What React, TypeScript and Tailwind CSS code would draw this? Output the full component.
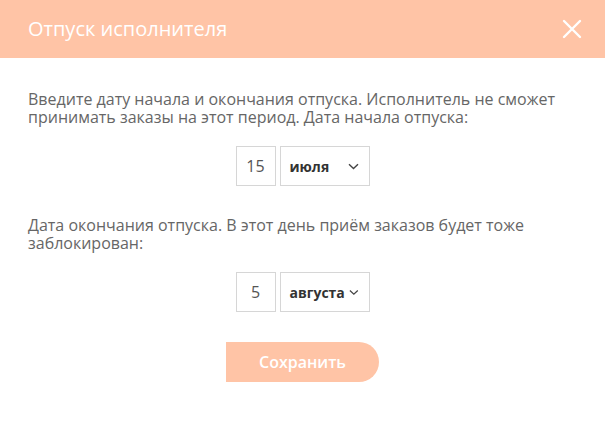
function DatePicker({ day, month }: { day: string; month: string }) {
  return (
    <div className="flex justify-center gap-[4px]">
      <div className="flex h-[40px] w-[40px] items-center justify-center border border-[#d6d6d6] text-[16px] text-[#555]">
        {day}
      </div>
      <div className="flex h-[40px] w-[90px] items-center justify-between gap-[4px] border border-[#d6d6d6] pl-[9px] pr-[10px]">
        <span className="text-[14px] font-bold text-[#333]">{month}</span>
        <svg width="11" height="7" viewBox="0 0 11 7" className="shrink" aria-hidden>
          <path d="M1 1.2L5.5 5.5L10 1.2" fill="none" stroke="#444" strokeWidth="1.4" />
        </svg>
      </div>
    </div>
  );
}

export default function App() {
  return (
    <div className="h-[438px] w-[605px] bg-white font-['Open_Sans',sans-serif]">
      <header className="flex h-[58px] items-center justify-between bg-[#ffc4a6] pl-[28px] pr-[22px]">
        <h2 className="text-[20px] font-normal text-white">Отпуск исполнителя</h2>
        <svg width="22" height="22" viewBox="0 0 22 22" aria-hidden>
          <path d="M3 3L19 19M19 3L3 19" stroke="white" strokeWidth="2.4" strokeLinecap="round" />
        </svg>
      </header>

      <div className="flex flex-col px-[28px] pt-[32px]">
        <p className="text-[16px] leading-[18px] text-[#666]">
          Введите дату начала и окончания отпуска. Исполнитель не сможет принимать заказы на этот
          период. Дата начала отпуска:
        </p>
        <div className="mt-[20px]">
          <DatePicker day="15" month="июля" />
        </div>

        <p className="mt-[30px] text-[16px] leading-[18px] text-[#666]">
          Дата окончания отпуска. В этот день приём заказов будет тоже заблокирован:
        </p>
        <div className="mt-[20px]">
          <DatePicker day="5" month="августа" />
        </div>

        <div className="mt-[30px] flex justify-center">
          <button
            type="button"
            className="h-[40px] w-[153px] rounded-r-[20px] bg-[#ffc4a6] text-[16px] font-semibold text-white"
          >
            Сохранить
          </button>
        </div>
      </div>
    </div>
  );
}
